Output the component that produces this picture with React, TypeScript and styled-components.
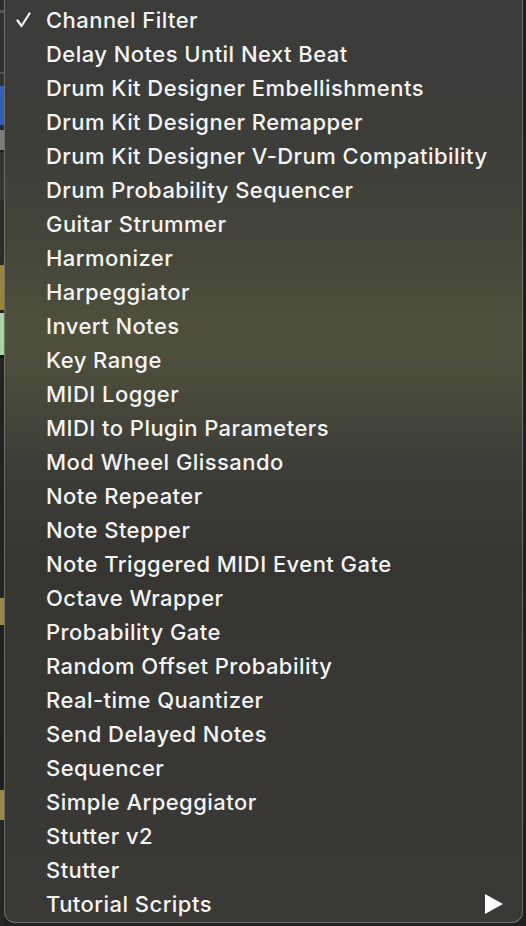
import React from "react";
import styled, { createGlobalStyle } from "styled-components";

const Global = createGlobalStyle`
  html, body { margin: 0; padding: 0; background: #1f1f1f; overflow: hidden; }
  #root { width: 526px; height: 926px; }
`;

const Page = styled.div`
  display: flex;
  width: 526px;
  height: 926px;
  background: #1f1f1f;
`;

const Strip = styled.div`
  width: 4px;
  display: flex;
  flex-direction: column;
  flex-shrink: 0;
`;

const Seg = styled.div<{ $h: number; $c: string }>`
  height: ${(p) => p.$h}px;
  background: ${(p) => p.$c};
  flex-shrink: 0;
`;

const Menu = styled.div`
  flex: 1;
  margin-right: 3px;
  height: 923px;
  box-sizing: border-box;
  border: 1px solid rgba(150, 150, 140, 0.55);
  border-top: none;
  border-radius: 0 0 11px 11px;
  background: linear-gradient(
    180deg,
    #3b3b3a 0px,
    #3d3d3a 150px,
    #46473a 260px,
    #4f503c 330px,
    #4a4b3b 380px,
    #3c3c37 470px,
    #363532 560px,
    #383733 700px,
    #3a3935 923px
  );
  padding-top: 3px;
  display: flex;
  flex-direction: column;
`;

const Row = styled.div`
  height: 34px;
  display: flex;
  align-items: center;
  position: relative;
  padding-left: 41px;
  font-family: Inter, "Noto Sans", sans-serif;
  font-size: 22px;
  font-weight: 500;
  color: #f4f4f4;
  letter-spacing: 0.45px;
  white-space: nowrap;
`;

const Check = styled.svg`
  position: absolute;
  left: 11px;
  top: 9px;
`;

const Arrow = styled.svg`
  position: absolute;
  right: 19px;
  top: 7px;
`;

const items = [
  "Channel Filter",
  "Delay Notes Until Next Beat",
  "Drum Kit Designer Embellishments",
  "Drum Kit Designer Remapper",
  "Drum Kit Designer V-Drum Compatibility",
  "Drum Probability Sequencer",
  "Guitar Strummer",
  "Harmonizer",
  "Harpeggiator",
  "Invert Notes",
  "Key Range",
  "MIDI Logger",
  "MIDI to Plugin Parameters",
  "Mod Wheel Glissando",
  "Note Repeater",
  "Note Stepper",
  "Note Triggered MIDI Event Gate",
  "Octave Wrapper",
  "Probability Gate",
  "Random Offset Probability",
  "Real-time Quantizer",
  "Send Delayed Notes",
  "Sequencer",
  "Simple Arpeggiator",
  "Stutter v2",
  "Stutter",
  "Tutorial Scripts",
];

const segs: [number, string][] = [
  [10, "#2c2c2c"],
  [3, "#555"],
  [59, "#2e2e2e"],
  [2, "#505050"],
  [12, "#333"],
  [39, "#2f5fbf"],
  [5, "#2a2a2a"],
  [20, "#7c7c7c"],
  [2, "#222"],
  [48, "#343434"],
  [65, "#2b2b2b"],
  [45, "#9a8536"],
  [3, "#222"],
  [42, "#a9d3a6"],
  [3, "#111"],
  [240, "#232323"],
  [27, "#9a8a48"],
  [165, "#1f1f1f"],
  [30, "#9a8a48"],
  [106, "#262626"],
];

export default function App() {
  return (
    <Page>
      <Global />
      <Strip>
        {segs.map(([h, c], i) => (
          <Seg key={i} $h={h} $c={c} />
        ))}
      </Strip>
      <Menu>
        {items.map((t, i) => (
          <Row key={t}>
            {i === 0 && (
              <Check width="15" height="16" viewBox="0 0 15 16">
                <path
                  d="M1.5 8.5 L5.5 14 L13.5 1.5"
                  fill="none"
                  stroke="#f4f4f4"
                  strokeWidth="2.2"
                  strokeLinecap="round"
                  strokeLinejoin="round"
                />
              </Check>
            )}
            {t}
            {i === items.length - 1 && (
              <Arrow width="18" height="20" viewBox="0 0 18 20">
                <path d="M0 0 L18 10 L0 20 Z" fill="#ffffff" />
              </Arrow>
            )}
          </Row>
        ))}
      </Menu>
    </Page>
  );
}
